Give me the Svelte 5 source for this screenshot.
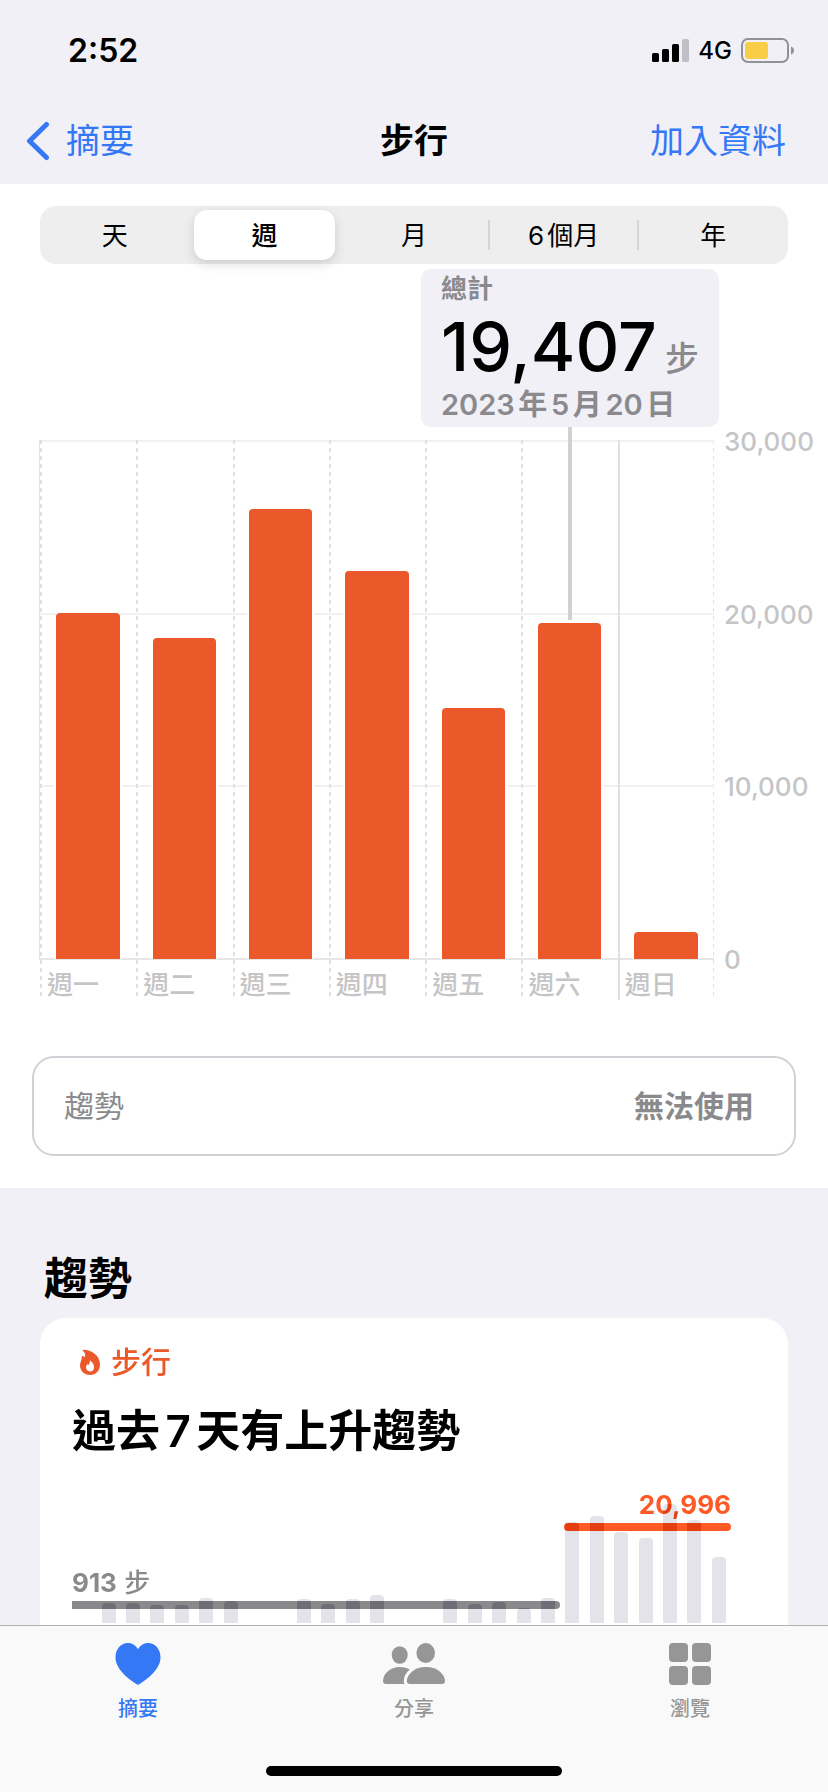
<script lang="ts">
	const MAX_STEPS = 30000;
	const ticks = ['30,000', '20,000', '10,000', '0'];
	const ranges = ['天', '週', '月', '6個月', '年'];

	const week = [
		{ label: '週一', steps: 20000 },
		{ label: '週二', steps: 18540 },
		{ label: '週三', steps: 26020 },
		{ label: '週四', steps: 22430 },
		{ label: '週五', steps: 14500 },
		{ label: '週六', steps: 19407 },
		{ label: '週日', steps: 1560 }
	];

	// bar heights of the trend chart, 0 means no data for that day
	const trend = [
		0, 20, 20, 18, 18, 25, 22, 0, 0, 24, 19, 24, 28, 0, 0, 24, 19, 21, 15, 25, 101, 107, 91, 85,
		119, 103, 66
	];

	let range = $state('週');
	let selectedDay = $state(5);
	let tab = $state('摘要');
</script>

<div class="screen">
	<header>
		<div class="status">
			<span class="clock">2:52</span>
			<div class="indicators">
				<svg width="37" height="23" viewBox="0 0 37 23" aria-hidden="true">
					<rect x="0" y="14" width="7" height="9" rx="1.5" />
					<rect x="10" y="10" width="7" height="13" rx="1.5" />
					<rect x="20" y="5" width="7" height="18" rx="1.5" />
					<rect x="30" y="0" width="7" height="23" rx="1.5" fill="#c0bfc5" />
				</svg>
				<span class="network">4G</span>
				<svg width="53" height="25" viewBox="0 0 53 25" aria-hidden="true">
					<rect x="1" y="1" width="46" height="23" rx="6" fill="none" stroke="#929196" stroke-width="2" />
					<rect x="4" y="4" width="23" height="17" rx="3" fill="#f7ce46" />
					<path d="M50 8.5c4 1.2 4 6.8 0 8z" fill="#929196" />
				</svg>
			</div>
		</div>
		<nav class="navbar">
			<a class="back" href="#summary">
				<svg width="24" height="40" viewBox="0 0 24 40" aria-hidden="true">
					<path d="M20.500 3.500 3.500 20l17 16.500" fill="none" stroke="currentColor" stroke-width="5" stroke-linecap="round" stroke-linejoin="round" />
				</svg>
				摘要
			</a>
			<h1>步行</h1>
			<a class="add" href="#add">加入資料</a>
		</nav>
	</header>

	<main>
		<section class="overview">
			<div class="segments">
				{#each ranges as item}
					<button class:active={range === item} onclick={() => (range = item)}>{item}</button>
				{/each}
			</div>

			<div class="callout">
				<span class="caption">總計</span>
				<div class="total"><strong>19,407</strong><span class="unit">步</span></div>
				<span class="date">2023年5月20日</span>
			</div>

			<div class="chart">
				<div class="plot">
					<div class="lines"><i></i><i></i><i></i></div>
					<div class="days">
						{#each week as day, i}
							<button class="day" class:sunday={i === 6} onclick={() => (selectedDay = i)}>
								<span class="track">
									{#if selectedDay === i}<span class="stem"></span>{/if}
									<span class="bar" style="height: {(day.steps / MAX_STEPS) * 100}%"></span>
								</span>
								<span class="weekday">{day.label}</span>
							</button>
						{/each}
					</div>
				</div>
				<div class="axis">
					{#each ticks as tick}
						<span>{tick}</span>
					{/each}
				</div>
			</div>

			<button class="trend-row">
				<span>趨勢</span>
				<span class="value">無法使用</span>
			</button>
		</section>

		<section class="trends">
			<h2>趨勢</h2>
			<article class="card">
				<div class="topic">
					<svg width="20" height="26" viewBox="0 0 20 26" aria-hidden="true">
						<path
							fill="currentColor"
							fill-rule="evenodd"
							d="M3 .7C11 .5 20 6 20 15.500 20 22 15.500 26 10 26S0 22 0 16.500C0 13 1.800 11 1.800 8.500c0-.8.2-1.500.8-1.500.8 0 1.500.6 1.900 1.500C5.800 6 5.500 4 3.200 2.200 2.600 1.700 2.500.9 3 .7ZM9.700 11.200c.5 2.400-.7 3.100-1.100 4.800-.6-.1-.9-.6-1.100-1.100C6.500 16 6 17.300 6 18.600c0 2.300 1.700 3.900 4 3.900s4-1.600 4-4c0-3.500-2-6-4.300-7.300Z"
						/>
					</svg>
					步行
				</div>
				<h3>過去7天有上升趨勢</h3>
				<div class="mini">
					<div class="averages">
						<div class="average before">913<small>步</small></div>
						<div class="average after">20,996</div>
					</div>
					<div class="bars">
						{#each trend as height}
							<i style="height: {height}px"></i>
						{/each}
					</div>
				</div>
			</article>
		</section>
	</main>

	<footer>
		<div class="tabs">
			<button class:active={tab === '摘要'} onclick={() => (tab = '摘要')}>
				<svg width="46" height="42" viewBox="0 0 46 42" aria-hidden="true">
					<path d="M23 42C18 39 .5 28 .5 14.500.5 6.500 5.500 0 12.800 0 17.500 0 21 2.500 23 6.300 25 2.500 28.500 0 33.200 0 40.500 0 45.500 6.500 45.500 14.500 45.500 28 28 39 23 42Z" />
				</svg>
				摘要
			</button>
			<button class:active={tab === '分享'} onclick={() => (tab = '分享')}>
				<svg width="62" height="42" viewBox="0 0 62 42" aria-hidden="true">
					<ellipse cx="16.700" cy="12" rx="8" ry="8.700" />
					<ellipse cx="42.700" cy="10" rx="9.300" ry="10" />
					<path d="M3 41C1 41 0 40 0 38 0 31 7 24 17 24c3.800 0 7.200 1 9.800 2.600C23 29.800 20.800 33.500 20.800 38c0 1.200.2 2.200.7 3Z" />
					<path d="M27 41c-2.200 0-3.200-1-3.200-3 0-6 7.200-14 19.200-14s19 8 19 14c0 2-1 3-3.200 3Z" />
				</svg>
				分享
			</button>
			<button class:active={tab === '瀏覽'} onclick={() => (tab = '瀏覽')}>
				<svg width="42" height="42" viewBox="0 0 42 42" aria-hidden="true">
					<rect width="19" height="19" rx="4" />
					<rect x="23" width="19" height="19" rx="4" />
					<rect y="23" width="19" height="19" rx="4" />
					<rect x="23" y="23" width="19" height="19" rx="4" />
				</svg>
				瀏覽
			</button>
		</div>
		<div class="home"></div>
	</footer>
</div>

<style>
	:global(body) {
		margin: 0;
		background: #f1f0f6;
	}
	.screen {
		height: 100vh;
		display: flex;
		flex-direction: column;
		font-family: Inter, 'Noto Sans CJK TC', sans-serif;
		color: #000;
		text-autospace: normal;
	}
	button {
		margin: 0;
		padding: 0;
		border: 0;
		background: none;
		font: inherit;
		color: inherit;
		cursor: pointer;
	}
	a {
		color: #3478f6;
		text-decoration: none;
	}
	h1,
	h2,
	h3 {
		margin: 0;
	}
	svg {
		display: block;
		flex: none;
	}

	/* status and navigation bar */
	.status {
		display: flex;
		justify-content: space-between;
		align-items: center;
		height: 100px;
		padding: 0 34px 0 68px;
	}
	.clock {
		font-size: 32px;
		font-weight: 600;
	}
	.indicators {
		display: flex;
		align-items: center;
		gap: 9px;
	}
	.network {
		font-size: 24px;
		font-weight: 500;
	}
	.navbar {
		display: grid;
		grid-template-columns: 1fr auto 1fr;
		align-items: center;
		height: 84px;
		box-sizing: border-box;
		padding: 0 42px 2px;
		font-size: 34px;
		line-height: 48px;
	}
	.back {
		display: flex;
		align-items: center;
		gap: 16px;
		margin-left: -16px;
	}
	h1 {
		font-size: 34px;
		font-weight: 600;
	}
	.add {
		text-align: right;
	}

	main {
		flex: 1;
		min-height: 0;
		overflow-y: auto;
		scrollbar-width: none;
	}
	.overview {
		display: flex;
		flex-direction: column;
		padding: 22px 0 32px;
		background: #fff;
	}
	.segments {
		display: grid;
		grid-template-columns: repeat(5, 1fr);
		height: 58px;
		margin: 0 40px;
		border-radius: 16px;
		background: #eee;
		font-size: 26px;
	}
	.segments button {
		position: relative;
		margin: 4px;
		padding-bottom: 4px;
		border-radius: 13px;
	}
	.segments .active {
		background: #fff;
		box-shadow: 0 4px 12px rgba(0, 0, 0, 0.14);
		font-weight: 500;
	}
	.segments button:nth-child(n + 4)::before {
		content: '';
		position: absolute;
		left: -5px;
		top: 10px;
		bottom: 10px;
		width: 2px;
		background: #d5d5d7;
	}

	/* selected day */
	.callout {
		align-self: flex-end;
		display: flex;
		flex-direction: column;
		height: 158px;
		width: 298px;
		box-sizing: border-box;
		margin: 5px 109px 13px 0;
		padding-left: 20px;
		border-radius: 10px;
		background: #f1f0f6;
		color: #8a8a8e;
		font-weight: 600;
	}
	.caption {
		font-size: 26px;
		line-height: 40px;
	}
	.total {
		display: flex;
		align-items: baseline;
		gap: 8px;
		height: 74px;
		line-height: 74px;
	}
	.total strong {
		font-size: 68px;
		font-weight: 500;
		color: #000;
	}
	.unit {
		font-size: 34px;
		font-weight: 500;
	}
	.date {
		font-size: 29px;
		line-height: 44px;
		white-space: nowrap;
	}

	.chart {
		display: flex;
		margin-left: 40px;
		color: #c5c5c7;
		font-size: 26px;
		font-weight: 500;
	}
	.plot {
		flex: 1;
		display: grid;
		/* the closing dashed line on the right */
		background: repeating-linear-gradient(#e3e3e3 0 4px, transparent 4px 8px) right / 1px 100% no-repeat;
	}
	.lines,
	.days {
		grid-area: 1 / 1;
	}
	.lines {
		display: flex;
		flex-direction: column;
		height: 520px;
		border-bottom: 2px solid #e5e5e5;
		box-shadow: -1px 0 #e5e5e5;
		box-sizing: border-box;
	}
	.lines i {
		flex: 1;
		border-top: 2px solid #f1f1f1;
	}
	.days {
		display: grid;
		grid-template-columns: repeat(7, 1fr);
	}
	.day {
		display: flex;
		flex-direction: column;
		background: repeating-linear-gradient(#e0e0e0 0 4px, transparent 4px 8px) left / 2px 100% no-repeat;
		text-align: left;
	}
	.sunday {
		background: linear-gradient(#e0e0e0, #e0e0e0) left / 2px 100% no-repeat;
	}
	.track {
		align-self: stretch;
		display: flex;
		flex-direction: column;
		justify-content: flex-end;
		align-items: center;
		height: 519px;
	}
	.bar {
		width: 66%;
		border-radius: 4px 4px 0 0;
		background: #eb5829;
		box-shadow:
			-2px 0 #fff,
			2px 0 #fff;
	}
	.stem {
		flex: 1;
		width: 4px;
		margin: -13px 0 3px;
		background: #d1d0d5;
	}
	.weekday {
		height: 41px;
		box-sizing: border-box;
		padding: 6px 0 0 7px;
		line-height: 40px;
	}
	.axis {
		display: flex;
		flex-direction: column;
		justify-content: space-between;
		width: 104px;
		height: 550px;
		margin-top: -14px;
		padding-left: 10px;
		line-height: 32px;
	}

	.trend-row {
		display: flex;
		justify-content: space-between;
		align-items: center;
		height: 100px;
		margin: 56px 32px 0;
		padding: 0 40px 4px 30px;
		border: 2px solid #d1d0d6;
		border-radius: 22px;
		color: #8a8a8c;
		font-size: 30px;
	}
	.value {
		font-weight: 600;
	}

	/* trends */
	.trends {
		padding: 58px 40px 0;
	}
	h2 {
		padding-left: 4px;
		font-size: 44px;
		line-height: 66px;
		font-weight: 600;
		margin-bottom: 6px;
	}
	.card {
		padding: 22px 57px 48px 32px;
		border-radius: 26px;
		background: #fff;
		isolation: isolate;
	}
	.topic {
		display: flex;
		align-items: center;
		gap: 11px;
		padding-left: 8px;
		color: #eb5829;
		font-size: 30px;
		line-height: 44px;
		font-weight: 500;
	}
	h3 {
		margin: 14px 0 18px;
		font-size: 44px;
		line-height: 66px;
		font-weight: 600;
	}
	.mini {
		display: grid;
		height: 141px;
	}
	.averages,
	.bars {
		grid-area: 1 / 1;
		display: grid;
		align-items: end;
	}
	.averages {
		grid-template-columns: 20fr 7fr;
		font-size: 26px;
		line-height: 36px;
		font-weight: 700;
	}
	.average::after {
		content: '';
		display: block;
		height: 8px;
		border-radius: 4px;
		background: currentColor;
	}
	.before {
		margin-bottom: 14px;
		color: #8a8a8c;
	}
	.before::after {
		border-radius: 0 4px 4px 0;
	}
	.before small {
		margin-left: 4px;
		font-size: 26px;
		font-weight: 500;
	}
	.after {
		margin: 0 0 92px 4px;
		color: #ff5a26;
		text-align: right;
	}
	.bars {
		grid-template-columns: repeat(27, 1fr);
		justify-items: center;
		/* subtracts from white and from the average lines alike */
		mix-blend-mode: difference;
	}
	.bars i {
		width: 14px;
		border-radius: 4px 4px 0 0;
		background: #1b1c16;
	}

	/* tab bar */
	footer {
		border-top: 1px solid #b2b2b2;
		background: #f9f9f9;
	}
	.tabs {
		display: grid;
		grid-template-columns: repeat(3, 1fr);
		height: 140px;
	}
	.tabs button {
		display: flex;
		flex-direction: column;
		align-items: center;
		gap: 8px;
		padding-top: 17px;
		color: #969696;
		fill: currentColor;
		font-size: 20px;
		line-height: 32px;
		font-weight: 500;
	}
	.tabs .active {
		color: #3478f6;
	}
	.home {
		width: 296px;
		height: 10px;
		margin: 0 auto 16px;
		border-radius: 5px;
		background: #000;
	}
</style>
